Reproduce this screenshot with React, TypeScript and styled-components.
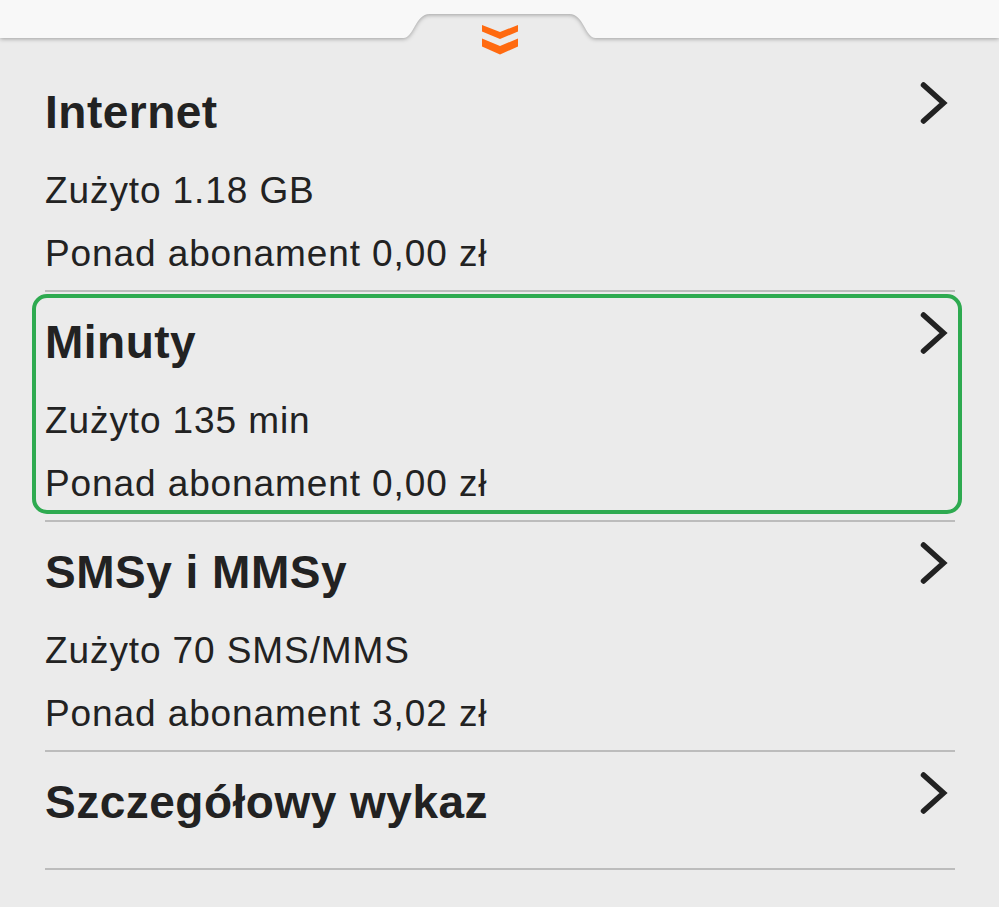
import React from "react";
import styled, { createGlobalStyle } from "styled-components";

const GlobalStyle = createGlobalStyle`
  html, body {
    margin: 0;
    padding: 0;
    background: #ebebeb;
  }
  body {
    font-family: "Liberation Sans", Arial, Helvetica, sans-serif;
    color: #222222;
    -webkit-font-smoothing: antialiased;
  }
`;

const Page = styled.div`
  width: 999px;
  min-height: 907px;
  background: #ebebeb;
  overflow: hidden;
`;

const HeaderWrap = styled.div`
  position: relative;
  height: 38px;
`;

const HeaderBar = styled.div`
  display: flex;
  height: 38px;
  filter: drop-shadow(0 1.5px 2px rgba(0, 0, 0, 0.32));
`;

const Wing = styled.div`
  flex: 1;
  height: 38px;
  background: #f8f8f8;
`;

const Notch = styled.svg`
  display: block;
  flex: 0 0 201px;
  width: 201px;
  height: 38px;
`;

const Handle = styled.svg`
  position: absolute;
  left: 482px;
  top: 25px;
  width: 36px;
  height: 30px;
`;

const List = styled.div`
  padding: 24px 44px 0 45px;
`;

const Section = styled.section<{ $highlight?: boolean; $tall?: boolean }>`
  position: relative;
  padding: 23px 0 ${(p) => (p.$tall ? "19px" : "5px")};
  border-bottom: 2px solid #bcbcbc;

  ${(p) =>
    p.$highlight &&
    `
    &::after {
      content: "";
      position: absolute;
      top: 2px;
      bottom: 6px;
      left: -13px;
      right: -7px;
      border: 4px solid #2eaa50;
      border-radius: 15px;
      pointer-events: none;
    }
  `}
`;

const TitleRow = styled.div`
  display: flex;
  justify-content: space-between;
  align-items: flex-start;
  margin-bottom: 20px;
`;

const Title = styled.h2`
  margin: 0;
  font-size: 46px;
  line-height: 54px;
  font-weight: 700;
  letter-spacing: 0.5px;
  color: #222222;
`;

const Chevron = styled.svg`
  display: block;
  width: 40px;
  height: 48px;
  margin-top: -6px;
  flex: 0 0 40px;
`;

const Row = styled.p`
  margin: 0;
  font-size: 37px;
  line-height: 63px;
  letter-spacing: 0.9px;
  font-weight: 400;
  color: #222222;
`;

type Item = {
  title: string;
  rows: string[];
  highlight?: boolean;
};

const items: Item[] = [
  { title: "Internet", rows: ["Zużyto 1.18 GB", "Ponad abonament 0,00 zł"] },
  {
    title: "Minuty",
    rows: ["Zużyto 135 min", "Ponad abonament 0,00 zł"],
    highlight: true,
  },
  {
    title: "SMSy i MMSy",
    rows: ["Zużyto 70 SMS/MMS", "Ponad abonament 3,02 zł"],
  },
  { title: "Szczegółowy wykaz", rows: [] },
];

function ChevronIcon() {
  return (
    <Chevron viewBox="0 0 40 48">
      <polyline
        points="8.5,6 28.5,24 8.5,42"
        fill="none"
        stroke="#222222"
        strokeWidth="5.5"
        strokeLinecap="round"
        strokeLinejoin="miter"
      />
    </Chevron>
  );
}

export default function App() {
  return (
    <Page>
      <GlobalStyle />
      <HeaderWrap>
        <HeaderBar>
          <Wing />
          <Notch viewBox="0 0 201 38">
            <path
              d="M0,0 H201 V38 H196.5 C186.5,38 184.5,14 170.5,14 H30.5 C16.5,14 14.5,38 4.5,38 H0 Z"
              fill="#f8f8f8"
            />
          </Notch>
          <Wing />
        </HeaderBar>
        <Handle viewBox="0 0 36 30">
          <polygon points="0,0 18,7 36,0 36,6.5 18,14 0,6.5" fill="#ff6a10" />
          <polygon points="0,13.5 18,21 36,13.5 36,21.5 18,29.5 0,21.5" fill="#ff6a10" />
        </Handle>
      </HeaderWrap>
      <List>
        {items.map((item) => (
          <Section
            key={item.title}
            $highlight={item.highlight}
            $tall={item.rows.length === 0}
          >
            <TitleRow>
              <Title>{item.title}</Title>
              <ChevronIcon />
            </TitleRow>
            {item.rows.map((r) => (
              <Row key={r}>{r}</Row>
            ))}
          </Section>
        ))}
      </List>
    </Page>
  );
}
